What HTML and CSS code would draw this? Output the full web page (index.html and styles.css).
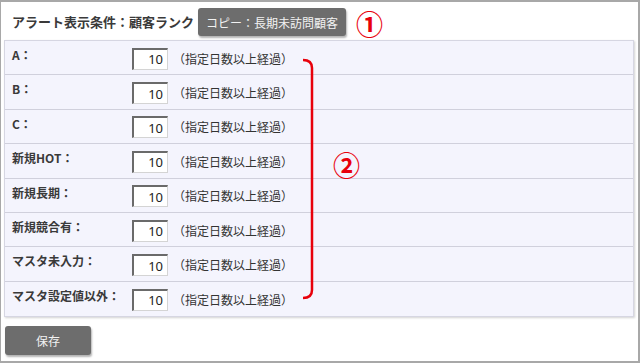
FILE: index.html
```html
<!DOCTYPE html>
<html lang="ja">
<head>
<meta charset="utf-8">
<link rel="stylesheet" href="styles.css">
</head>
<body>
<div class="frame">
  <div class="header">
    <span class="title">アラート表示条件：顧客ランク</span>
    <button class="btn copy">コピー：長期未訪問顧客</button>
    <span class="mark mark1">①</span>
  </div>
  <div class="table">
    <div class="row"><span class="label">A：</span><input class="num" value="10"><span class="note">（指定日数以上経過）</span></div>
    <div class="row"><span class="label">B：</span><input class="num" value="10"><span class="note">（指定日数以上経過）</span></div>
    <div class="row"><span class="label">C：</span><input class="num" value="10"><span class="note">（指定日数以上経過）</span></div>
    <div class="row"><span class="label">新規HOT：</span><input class="num" value="10"><span class="note">（指定日数以上経過）</span></div>
    <div class="row"><span class="label">新規長期：</span><input class="num" value="10"><span class="note">（指定日数以上経過）</span></div>
    <div class="row"><span class="label">新規競合有：</span><input class="num" value="10"><span class="note">（指定日数以上経過）</span></div>
    <div class="row"><span class="label">マスタ未入力：</span><input class="num" value="10"><span class="note">（指定日数以上経過）</span></div>
    <div class="row"><span class="label">マスタ設定値以外：</span><input class="num" value="10"><span class="note">（指定日数以上経過）</span></div>
  </div>
  <div class="footer">
    <button class="btn save">保存</button>
  </div>
  <svg class="bracket" width="20" height="250" viewBox="0 0 20 250">
    <path d="M1 2 Q10 2 10 10 V232 Q10 240 1 240" fill="none" stroke="#e8000b" stroke-width="2.5"/>
  </svg>
  <span class="mark mark2">②</span>
</div>
</body>
</html>
```
FILE: styles.css
```css
html, body {
  margin: 0;
  padding: 0;
  background: #fff;
}
body {
  font-family: "Noto Sans CJK JP", "Noto Sans", sans-serif;
  color: #333;
}
.frame {
  position: relative;
  width: 640px;
  height: 363px;
  box-sizing: border-box;
  border: 2px solid #a8a8a8;
  border-left-width: 1px;
  background: #fff;
  padding: 0 3px 0 3px;
}
.header {
  display: flex;
  align-items: center;
  height: 38px;
  padding-left: 8px;
}
.title {
  font-size: 13px;
  font-weight: bold;
  color: #3a3a3a;
}
.btn {
  font-family: "Noto Sans CJK JP", sans-serif;
  background: #6d6d6d;
  color: #f2f2f2;
  border: none;
  border-radius: 3px;
  box-shadow: 1px 2px 2px rgba(0,0,0,0.3);
  cursor: pointer;
}
.copy {
  margin-left: 4px;
  height: 28px;
  width: 148px;
  font-size: 12px;
  padding: 0;
  margin-top: 2px;
}
.mark {
  color: #e8000b;
  font-weight: bold;
  font-size: 27px;
  line-height: 1;
}
.mark1 {
  margin-left: 10px;
  margin-top: 4px;
}
.table {
  width: 630px;
  box-sizing: border-box;
  border: 1px solid #d6d6e2;
  background: #f4f4fd;
  box-shadow: 1px 1px 2px rgba(0,0,0,0.18);
}
.row {
  display: flex;
  align-items: center;
  height: 34.4px;
  box-sizing: border-box;
  border-bottom: 1px solid #d0d0dc;
  padding-left: 7px;
}
.row:last-child {
  border-bottom: none;
}
.label {
  width: 120px;
  flex: none;
  font-size: 12px;
  font-weight: bold;
  color: #3a3a3a;
  align-self: flex-start;
  margin-top: 6px;
  line-height: 16px;
}
.num {
  width: 36px;
  height: 22px;
  box-sizing: border-box;
  border-top: 2px solid #6a6a6a;
  border-left: 2px solid #6a6a6a;
  border-right: 1px solid #d4d4d4;
  border-bottom: 1px solid #d4d4d4;
  background: #fff;
  text-align: right;
  font-family: "Noto Sans", "DejaVu Sans", sans-serif;
  font-size: 13px;
  color: #222;
  padding: 0 4px 0 0;
  margin: 0;
  margin-top: 2px;
}
.note {
  font-size: 12px;
  margin-left: 5px;
  color: #333;
  margin-top: 1px;
}
.footer {
  padding: 9px 0 0 1px;
}
.save {
  width: 86px;
  height: 29px;
  font-size: 12px;
}
.bracket {
  position: absolute;
  left: 301px;
  top: 56px;
}
.mark2 {
  position: absolute;
  left: 332px;
  top: 149px;
}
```
